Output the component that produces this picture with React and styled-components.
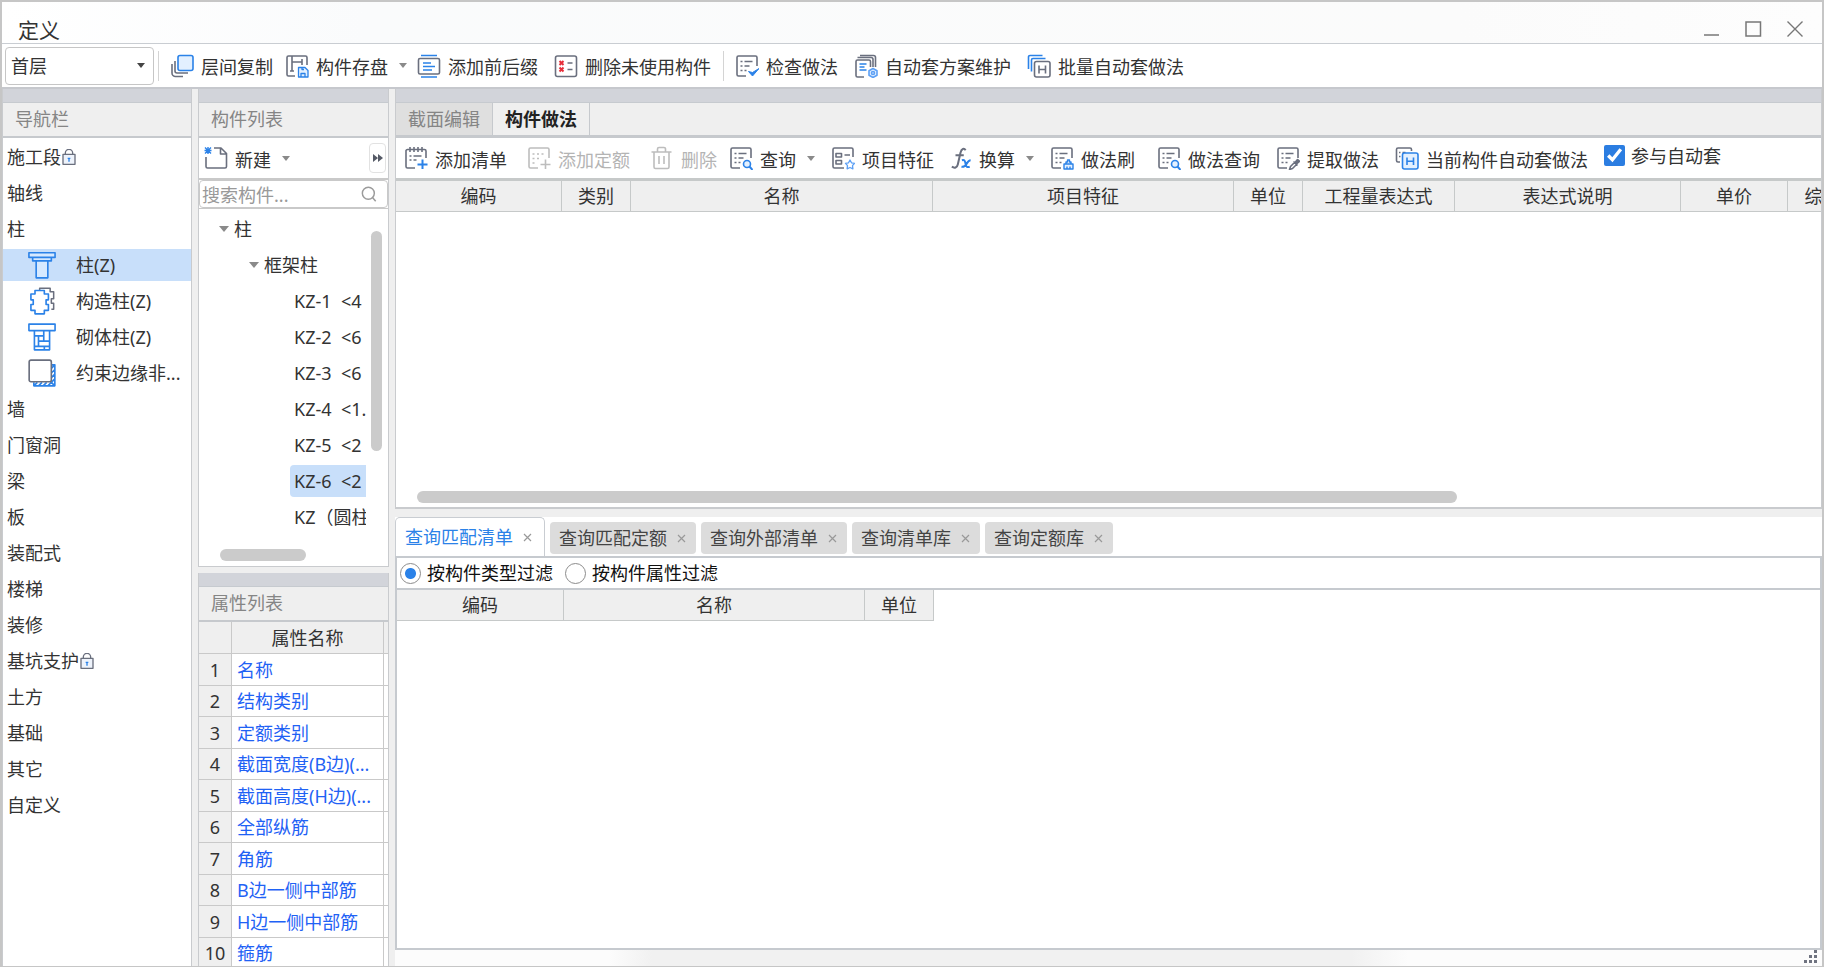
import React, { useState } from "react";
import styled, { createGlobalStyle } from "styled-components";

const GRAY = "#6a6f7e";
const BLUE = "#2b82e8";
const LIGHT = "#e3f0ff";

const Svg = ({ size = 24, children, color = GRAY }) => (
  <svg
    width={size}
    height={size}
    viewBox="0 0 24 24"
    fill="none"
    stroke={color}
    strokeWidth="1.6"
    strokeLinejoin="round"
    aria-hidden="true"
  >
    {children}
  </svg>
);

const DocLines = () => (
  <>
    <path d="M11 22H3.500a1.500 1.500 0 0 1-1.500-1.500v-17A1.500 1.500 0 0 1 3.500 2h17A1.500 1.500 0 0 1 22 3.500V12" />
    <path d="M5.500 7.500h2M9.500 7.500h8M5.500 12h2M9.500 12h5M5.500 16.500h2M9.500 16.500h2" />
  </>
);

const icons = {
  copy: (
    <Svg>
      <path d="M5 7v10a2 2 0 0 0 2 2h11M2 10v9a3.500 3.500 0 0 0 3.500 3.500H13" />
      <rect x="8" y="1.500" width="15" height="15" rx="2" stroke={BLUE} fill={LIGHT} />
    </Svg>
  ),
  save: (
    <Svg>
      <path d="M10 22H3.500A1.500 1.500 0 0 1 2 20.500v-17A1.500 1.500 0 0 1 3.500 2h17A1.500 1.500 0 0 1 22 3.500V11" />
      <path d="M7 2v15M17 5v6M7 8h10M5 17h4" />
      <path d="M13.500 13.500h6.500l3 3V23h-9.500zM16 23v-3.500h4V23M17 13.500v2h2" stroke={BLUE} fill={LIGHT} strokeWidth="1.300" />
    </Svg>
  ),
  affix: (
    <Svg>
      <rect x="1.500" y="4.500" width="21" height="15.500" rx="1.500" />
      <path d="M4 1.500h16M4 23h16M6 9h8M6 12.500h12M6 16h9" stroke={BLUE} />
    </Svg>
  ),
  clean: (
    <Svg>
      <rect x="1.500" y="2" width="21" height="20.500" rx="2" />
      <path d="M13.500 9h5M13.500 15.500h5" />
      <path d="M5.500 7l4 4M9.500 7l-4 4M5.500 13.500l4 4M9.500 13.500l-4 4" stroke="#e62e3a" strokeWidth="2" />
    </Svg>
  ),
  check: (
    <Svg>
      <DocLines />
      <path d="M13.500 17.500l4 4.500L24 14.500l-6.500 4z" stroke={BLUE} fill={BLUE} strokeWidth="1" />
    </Svg>
  ),
  scheme: (
    <Svg>
      <path d="M10 23H3.500A1.500 1.500 0 0 1 2 21.500v-14A1.500 1.500 0 0 1 3.500 6H15a1.500 1.500 0 0 1 1.500 1.500V13" />
      <path d="M3.500 3.500H17A2 2 0 0 1 19 5.500V13M6 1.500h13.500A2 2 0 0 1 21.500 3.500V13" />
      <path d="M5.500 10h7M5.500 13h5M5.500 16h7" stroke={BLUE} />
      <path d="M19 14.500l4 2.300v4.400l-4 2.300-4-2.300v-4.400z" stroke="#5da0f5" fill={LIGHT} />
      <circle cx="19" cy="19" r="1.500" stroke="#5da0f5" />
    </Svg>
  ),
  batch: (
    <Svg>
      <path d="M1.500 15V3a1.500 1.500 0 0 1 1.500-1.500h12.500M4.500 17.500V6A1.500 1.500 0 0 1 6 4.500h12.500" stroke={BLUE} />
      <rect x="7.500" y="7.500" width="15.500" height="15.500" rx="2" />
      <path d="M12 11.500v8M18.500 11.500v8M12 15.500h6.500" />
    </Svg>
  ),
  create: (
    <Svg>
      <path d="M10 2h7l5.500 5.500v13A1.500 1.500 0 0 1 21 22H3.500A1.500 1.500 0 0 1 2 20.500V11M16.500 2v6h6" />
      <path d="M1 1.500l6 6M7 1.500l-6 6M4 1v7M.5 4.500h7" stroke={BLUE} strokeWidth="1.400" />
    </Svg>
  ),
  addList: (
    <Svg>
      <path d="M11 22H3.500A1.500 1.500 0 0 1 2 20.500v-16A1.500 1.500 0 0 1 3.500 3.500h17A1.500 1.500 0 0 1 22 5v7" />
      <path d="M6 1v5M10 1v5M14 1v5M18 1v5M5.500 10h2M9.500 10h8M5.500 14h2M9.500 14h3" />
      <path d="M18.500 13.500V23M13.500 18.500h10" stroke={BLUE} strokeWidth="2" />
    </Svg>
  ),
  addQuota: (
    <Svg color="#bdbdbd">
      <path d="M11 22H3.500A1.500 1.500 0 0 1 2 20.500v-17A1.500 1.500 0 0 1 3.500 2h17A1.500 1.500 0 0 1 22 3.500V12" />
      <path d="M5.500 8h2M10 8h2M14.500 8h2M5.500 12.500h2M10 12.500h2M5.500 17h2M18.500 13.500V23M13.500 18.500h10" />
    </Svg>
  ),
  trash: (
    <Svg color="#bdbdbd">
      <path d="M1.500 6h20M7.500 6V3A1.500 1.500 0 0 1 9 1.500h5A1.500 1.500 0 0 1 15.500 3v3M4 6v15a1.500 1.500 0 0 0 1.500 1.500h12A1.500 1.500 0 0 0 19 21V6M9 10v8M14 10v8" />
    </Svg>
  ),
  query: (
    <Svg>
      <DocLines />
      <circle cx="18" cy="18" r="3.500" stroke={BLUE} fill={LIGHT} />
      <path d="M20.500 20.500L23.500 24" stroke={BLUE} strokeWidth="2" />
    </Svg>
  ),
  feature: (
    <Svg>
      <path d="M13 22H3.500A1.500 1.500 0 0 1 2 20.500v-17A1.500 1.500 0 0 1 3.500 2h17A1.500 1.500 0 0 1 22 3.500V11" />
      <path d="M5 7.500h5.500v3.500H5zM5 14.500h5.500V18H5zM13.500 9H19" />
      <path d="M19 14l1.500 2.800 3 .5-2 2.300.4 3.200-2.900-1.300-2.900 1.300.4-3.200-2-2.300 3-.5z" stroke="#5da0f5" strokeWidth="1.300" />
    </Svg>
  ),
  fx: (
    <Svg size={22}>
      <path d="M17 3.500c-1.500-2.500-4.500-2-5.500 2.500l-3 13c-.8 3.500-3.500 4.500-6.500 2.500M6 9h9" strokeWidth="2.200" />
      <path d="M13 14.500c3-1 3.500 1 4 4s1.500 4 4.500 3M22.500 14.500c-2 0-3 1.500-4.500 4s-3 3.500-5.500 3" stroke={BLUE} strokeWidth="2.200" />
    </Svg>
  ),
  brush: (
    <Svg>
      <DocLines />
      <path d="M14 23v-5h9v5zM16 18v-2h1.500v-2h2v2H21v2M17 23v-2.500M20 23v-2.500" stroke={BLUE} fill={LIGHT} strokeWidth="1.400" />
    </Svg>
  ),
  extract: (
    <Svg>
      <DocLines />
      <path d="M13.500 23.500l1-3 4-4 2 2-4 4zM17.500 15.500l4 4M20 17.500l3-3.500" />
      <path d="M19 16.500l2.500-3 2 2-3 2.500z" fill={GRAY} />
    </Svg>
  ),
  current: (
    <Svg>
      <path d="M5 16H3a1.500 1.500 0 0 1-1.500-1.500v-11A1.500 1.500 0 0 1 3 2h12a1.500 1.500 0 0 1 1.500 1.500V5M4 6.500h1.500M7.500 6.500h3M4 10.500h1.500" />
      <rect x="7.500" y="7" width="15.500" height="16" rx="2" stroke={BLUE} fill={LIGHT} />
      <path d="M12 11.500v7.500M18.500 11.500v7.500M12 15.200h6.500" stroke={BLUE} />
    </Svg>
  ),
  lock: (
    <Svg size={16}>
      <path d="M6.500 8V6a5 5 0 0 1 11 0v2" strokeWidth="2" />
      <rect x="3" y="8" width="18" height="15" strokeWidth="2" fill="#eef3fb" />
      <path d="M12 13v6M10 14h4" stroke={BLUE} strokeWidth="2" />
    </Svg>
  ),
  search: (
    <Svg size={16} color="#9b9b9b">
      <circle cx="11" cy="11" r="9" strokeWidth="2.200" />
      <path d="M17 17l5 6" strokeWidth="2.200" />
    </Svg>
  ),
  column: (
    <Svg size={28} color={BLUE}>
      <path d="M.8 1.500h22.400v4H.8zM4 5.500h16v3H4zM7 8.500h10V23H7z" fill="#d6e9ff" strokeWidth="1.400" />
    </Svg>
  ),
  structural: (
    <Svg size={28}>
      <path d="M10 3V1h9v3h3v6h-2v4h2v5h-2" strokeWidth="1.300" />
      <path d="M6 3h8v3h3.500v5h-2v4h2v5H14v3H6v-3H2.500v-5h2v-4h-2V6H6z" stroke={BLUE} strokeWidth="1.400" fill="#fff" />
    </Svg>
  ),
  masonry: (
    <Svg size={28} color={BLUE}>
      <path d="M.8 1h22.400v5.500H.8zM5.500 6.500V23h13V6.500M5.500 11h8M9 15.500h9.500M5.500 20h13M13.500 6.500v9M9 11v9M14 20v3" strokeWidth="1.400" />
    </Svg>
  ),
  edge: (
    <Svg size={28}>
      <path d="M5 20v3h18V5h-3M5 23l3-3M9 23l3-3M13 23l3-3M17 23l6-6M20 16l3-3M20 12l3-3M20 8l3-3M20 20l3 3" stroke={BLUE} strokeWidth="1.400" />
      <rect x="1" y="1" width="19" height="18.500" rx="1.500" fill="#fff" strokeWidth="1.400" />
    </Svg>
  ),
};

const mainTools = [
  { icon: "copy", label: "层间复制", after: 12 },
  { icon: "save", label: "构件存盘", caret: true, after: 10 },
  { icon: "affix", label: "添加前后缀", after: 16 },
  { icon: "clean", label: "删除未使用构件", after: 8 },
  { divider: true },
  { icon: "check", label: "检查做法", after: 16 },
  { icon: "scheme", label: "自动套方案维护", after: 16 },
  { icon: "batch", label: "批量自动套做法", after: 16 },
];

const recipeTools = [
  { icon: "addList", label: "添加清单", after: 20 },
  { icon: "addQuota", label: "添加定额", after: 20, disabled: true },
  { icon: "trash", label: "删除", after: 12, disabled: true },
  { icon: "query", label: "查询", caret: true, after: 16 },
  { icon: "feature", label: "项目特征", after: 16 },
  { icon: "fx", label: "换算", caret: true, after: 16 },
  { icon: "brush", label: "做法刷", after: 22 },
  { icon: "query", label: "做法查询", after: 16 },
  { icon: "extract", label: "提取做法", after: 16 },
  { icon: "current", label: "当前构件自动套做法", after: 16 },
];

const navItems = [
  { label: "施工段", locked: true },
  { label: "轴线" },
  { label: "柱" },
  { label: "柱(Z)", icon: "column" },
  { label: "构造柱(Z)", icon: "structural" },
  { label: "砌体柱(Z)", icon: "masonry" },
  { label: "约束边缘非...", icon: "edge" },
  { label: "墙" },
  { label: "门窗洞" },
  { label: "梁" },
  { label: "板" },
  { label: "装配式" },
  { label: "楼梯" },
  { label: "装修" },
  { label: "基坑支护", locked: true },
  { label: "土方" },
  { label: "基础" },
  { label: "其它" },
  { label: "自定义" },
];

const members = ["KZ-1  <4", "KZ-2  <6", "KZ-3  <6", "KZ-4  <1.", "KZ-5  <2", "KZ-6  <2", "KZ（圆柱"];

const properties = [
  "名称",
  "结构类别",
  "定额类别",
  "截面宽度(B边)(...",
  "截面高度(H边)(...",
  "全部纵筋",
  "角筋",
  "B边一侧中部筋",
  "H边一侧中部筋",
  "箍筋",
];

const recipeColumns = [
  ["编码", 166],
  ["类别", 69],
  ["名称", 302],
  ["项目特征", 301],
  ["单位", 69],
  ["工程量表达式", 152],
  ["表达式说明", 226],
  ["单价", 107],
  ["综合单价", 106],
];

const matchColumns = [
  ["编码", 167],
  ["名称", 301],
  ["单位", 69],
];

const queryTabs = ["查询匹配清单", "查询匹配定额", "查询外部清单", "查询清单库", "查询定额库"];

const ToolItem = ({ tool }) => (
  <Tool type="button" disabled={tool.disabled} $after={tool.after}>
    {icons[tool.icon]}
    <span>{tool.label}</span>
    {tool.caret && <Caret />}
  </Tool>
);

const HeaderTable = ({ columns, label }) => {
  const total = columns.reduce((sum, col) => sum + col[1], 0);
  return (
    <Grid aria-label={label} style={{ width: total }}>
      <thead>
        <tr>
          {columns.map(([name, width]) => (
            <th key={name} style={{ width }}>
              {name}
            </th>
          ))}
        </tr>
      </thead>
    </Grid>
  );
};

const App = () => {
  const [nav, setNav] = useState("柱(Z)");
  const [member, setMember] = useState(members[5]);
  const [tab, setTab] = useState(queryTabs[0]);
  const [filter, setFilter] = useState("type");
  const [auto, setAuto] = useState(true);

  return (
    <Window>
      <GlobalStyle />
      <TitleBar>
        <h1>定义</h1>
        <WindowButtons>
          <button type="button" aria-label="最小化">
            <svg width="18" height="18" stroke="#777" fill="none"><path d="M2 15h15" strokeWidth="1.500" /></svg>
          </button>
          <button type="button" aria-label="最大化">
            <svg width="18" height="18" stroke="#777" fill="none"><rect x="2" y="2" width="14.500" height="14" strokeWidth="1.500" /></svg>
          </button>
          <button type="button" aria-label="关闭">
            <svg width="18" height="18" stroke="#777" fill="none"><path d="M1.500 1.500l15 15M16.500 1.500l-15 15" strokeWidth="1.400" /></svg>
          </button>
        </WindowButtons>
      </TitleBar>
      <MainToolbar>
        <FloorBox>
          <select aria-label="楼层" defaultValue="首层">
            <option>首层</option>
          </select>
          <Caret $dark />
        </FloorBox>
        <Divider />
        {mainTools.map((tool, i) =>
          tool.divider ? <Divider key={i} /> : <ToolItem key={i} tool={tool} />
        )}
      </MainToolbar>

      <Body>
        <Panel>
          <Band />
          <PanelTitle>导航栏</PanelTitle>
          <NavList>
            {navItems.map((item) => (
              <li key={item.label}>
                <NavButton
                  type="button"
                  $child={!!item.icon}
                  $active={nav === item.label}
                  onClick={() => setNav(item.label)}
                >
                  {item.icon && icons[item.icon]}
                  <span>{item.label}</span>
                  {item.locked && icons.lock}
                </NavButton>
              </li>
            ))}
          </NavList>
        </Panel>

        <Stack>
          <MemberPanel>
            <Band />
            <PanelTitle>构件列表</PanelTitle>
            <PanelTools>
              <ToolItem tool={{ icon: "create", label: "新建", caret: true, after: 0 }} />
              <MoreButton type="button" aria-label="更多">
                <svg width="10" height="8" fill="#555a66"><path d="M0 0l5 4-5 4zM5 0l5 4-5 4z" /></svg>
              </MoreButton>
            </PanelTools>
            <SearchBox>
              <input type="text" aria-label="搜索构件" placeholder="搜索构件..." />
              {icons.search}
            </SearchBox>
            <TreeArea>
              <Tree>
                <TreeRow $depth={0}><Caret /><span>柱</span></TreeRow>
                <TreeRow $depth={1}><Caret /><span>框架柱</span></TreeRow>
                {members.map((name) => (
                  <TreeRow key={name} $depth={2}>
                    <Leaf type="button" $active={member === name} onClick={() => setMember(name)}>
                      {name}
                    </Leaf>
                  </TreeRow>
                ))}
              </Tree>
              <VerticalThumb />
              <TreeThumb />
            </TreeArea>
          </MemberPanel>

          <PropertyPanel>
            <Band />
            <PanelTitle>属性列表</PanelTitle>
            <PropertyTable aria-label="属性列表">
              <thead>
                <tr><th /><th>属性名称</th><th /></tr>
              </thead>
              <tbody>
                {properties.map((name, i) => (
                  <tr key={name}>
                    <th scope="row">{i + 1}</th>
                    <td>{name}</td>
                    <td />
                  </tr>
                ))}
              </tbody>
            </PropertyTable>
          </PropertyPanel>
        </Stack>

        <Work>
          <RecipePanel>
            <Band />
            <ViewTabs>
              <ViewTab type="button">截面编辑</ViewTab>
              <ViewTab type="button" $active>构件做法</ViewTab>
            </ViewTabs>
            <RecipeToolbar>
              {recipeTools.map((tool) => <ToolItem key={tool.label} tool={tool} />)}
              <CheckLabel>
                <input type="checkbox" checked={auto} onChange={() => setAuto(!auto)} />
                参与自动套
              </CheckLabel>
            </RecipeToolbar>
            <TableArea>
              <HeaderTable columns={recipeColumns} label="构件做法" />
            </TableArea>
            <RecipeThumb />
          </RecipePanel>

          <QueryTabs>
            {queryTabs.map((name) => (
              <QueryTab key={name} $active={tab === name}>
                <button type="button" onClick={() => setTab(name)}>{name}</button>
                <button type="button" aria-label={`关闭${name}`}>
                  <svg width="9" height="9" stroke="#999"><path d="M1 1l7 7M8 1l-7 7" strokeWidth="1.200" /></svg>
                </button>
              </QueryTab>
            ))}
          </QueryTabs>
          <QueryPanel>
            <Filters>
              <label>
                <input type="radio" name="filter" checked={filter === "type"} onChange={() => setFilter("type")} />
                按构件类型过滤
              </label>
              <label>
                <input type="radio" name="filter" checked={filter === "prop"} onChange={() => setFilter("prop")} />
                按构件属性过滤
              </label>
            </Filters>
            <TableArea>
              <HeaderTable columns={matchColumns} label="查询匹配清单" />
            </TableArea>
          </QueryPanel>
          <StatusBar>
            <svg width="14" height="14" fill="#6f7380">
              <path d="M10 0h3v3h-3zM5 5h3v3h-3zM10 5h3v3h-3zM0 10h3v3h-3zM5 10h3v3h-3zM10 10h3v3h-3z" />
            </svg>
          </StatusBar>
        </Work>
      </Body>
    </Window>
  );
};

const GlobalStyle = createGlobalStyle`
  * {
    box-sizing: border-box;
  }
  body {
    margin: 0;
    background: #fff;
  }
  body, button, input, select {
    font-family: "Noto Sans", "Noto Sans CJK SC", sans-serif;
    font-size: 18px;
    line-height: 24px;
    color: #333;
  }
  button {
    padding: 0;
    border: none;
    background: none;
    white-space: nowrap;
  }
  svg {
    display: block;
    flex: none;
  }
`;

const Window = styled.div`
  height: 100vh;
  display: flex;
  flex-direction: column;
  overflow: hidden;
  border: 2px solid #c6c6c6;
  border-bottom-width: 1px;
`;

const TitleBar = styled.header`
  height: 42px;
  flex: none;
  display: flex;
  justify-content: space-between;
  padding: 14px 18px 0 16px;
  border-bottom: 1px solid #c9cdd2;
  background: linear-gradient(90deg, #fff, #fafbfc 20%, #fbfbfb 80%, #fdfdfd);
  h1 {
    margin: 0;
    font-size: 21px;
    line-height: 28px;
    font-weight: 400;
  }
`;

const WindowButtons = styled.div`
  display: flex;
  gap: 24px;
  padding-top: 4px;
  button {
    height: 18px;
  }
`;

const MainToolbar = styled.div`
  height: 43px;
  flex: none;
  display: flex;
  align-items: center;
  padding-left: 3px;
`;

const FloorBox = styled.div`
  width: 149px;
  height: 38px;
  display: flex;
  align-items: center;
  padding-right: 8px;
  border: 1px solid #c6c6c6;
  border-radius: 4px;
  select {
    flex: 1;
    height: 36px;
    appearance: none;
    border: none;
    background: none;
    padding: 0 5px;
  }
`;

const Caret = styled.i`
  flex: none;
  border: 4px solid transparent;
  border-top: 5px solid ${(p) => (p.$dark ? "#444" : "#8a8a8a")};
  border-bottom: none;
`;

const Divider = styled.i`
  width: 1px;
  height: 30px;
  margin: 0 11px 0 4px;
  background: #d4d4d4;
`;

const Tool = styled.button`
  display: flex;
  align-items: center;
  gap: 7px;
  height: 28px;
  margin-right: ${(p) => p.$after}px;
  color: ${(p) => (p.disabled ? "#b4b4b4" : "#333")};
  span {
    padding-top: 3px;
  }
  ${Caret} {
    margin-left: 4px;
  }
`;

const Body = styled.div`
  flex: 1;
  min-height: 0;
  display: grid;
  grid-template-columns: 190px 191px minmax(0, 1fr);
  gap: 6px;
  background: #efefef;
  border-top: 2px solid #c6c8cd;
`;

const Panel = styled.section`
  display: flex;
  flex-direction: column;
  min-height: 0;
  background: #fff;
  border: solid #c9cbce;
  border-width: 0 1px;
`;

const Band = styled.div`
  height: 14px;
  flex: none;
  background: #d2d4da;
  border-bottom: 1px solid #c6cacf;
`;

const PanelTitle = styled.h2`
  height: 35px;
  flex: none;
  margin: 0;
  padding: 4px 12px;
  font-size: 18px;
  line-height: 24px;
  font-weight: 400;
  color: #858585;
  background: #efefef;
  border-bottom: 2px solid #c6c9cd;
`;

const NavList = styled.ul`
  list-style: none;
  margin: 0;
  padding: 1px 0 0;
  li {
    height: 36px;
    padding: 2px 0;
  }
`;

const NavButton = styled.button`
  display: flex;
  align-items: center;
  width: 100%;
  height: 32px;
  padding-left: ${(p) => (p.$child ? 25 : 4)}px;
  background: ${(p) => (p.$active ? "#c8dffa" : "none")};
  ${(p) => p.$child && "gap: 20px;"}
`;

const Stack = styled.div`
  display: flex;
  flex-direction: column;
  gap: 6px;
  min-height: 0;
`;

const MemberPanel = styled(Panel)`
  flex: 0 0 478px;
  border-bottom-width: 1px;
`;

const PanelTools = styled.div`
  height: 42px;
  flex: none;
  display: flex;
  align-items: center;
  justify-content: space-between;
  padding: 0 2px 0 5px;
  border-bottom: 2px solid #c9c9c9;
`;

const MoreButton = styled.button`
  width: 17px;
  height: 30px;
  display: flex;
  align-items: center;
  justify-content: center;
  border: 1px solid #e2e2e2;
  border-radius: 4px;
`;

const SearchBox = styled.div`
  height: 28px;
  flex: none;
  display: flex;
  align-items: center;
  padding: 0 10px 0 2px;
  border: 1px solid #c9c9c9;
  border-radius: 4px;
  input {
    flex: 1;
    min-width: 0;
    height: 26px;
    padding: 1px 0 0;
    border: none;
    background: none;
  }
  input::placeholder {
    color: #999;
  }
`;

const TreeArea = styled.div`
  flex: 1;
  display: grid;
  grid-template-columns: minmax(0, 1fr) 11px;
  grid-template-rows: 1fr 12px;
  column-gap: 5px;
  padding: 2px 6px 5px 0;
  border-top: 1px solid #c9c9c9;
`;

const Tree = styled.div`
  overflow: hidden;
`;

const TreeRow = styled.div`
  display: flex;
  align-items: center;
  gap: 5px;
  height: 36px;
  padding-left: ${(p) => (p.$depth === 2 ? 91 : 20 + p.$depth * 30)}px;
  white-space: nowrap;
  ${Caret} {
    border-width: 6px 5px 0;
  }
`;

const Leaf = styled.button`
  flex: none;
  height: 32px;
  min-width: 90px;
  padding-left: 4px;
  text-align: left;
  white-space: pre;
  border-radius: 4px;
  background: ${(p) => (p.$active ? "#c8dffa" : "none")};
`;

const Thumb = styled.div`
  border-radius: 6px;
  background: #cbcbcb;
`;

const VerticalThumb = styled(Thumb)`
  height: 220px;
  margin-top: 20px;
`;

const TreeThumb = styled(Thumb)`
  width: 86px;
  height: 12px;
  margin-left: 21px;
`;

const PropertyPanel = styled(Panel)`
  flex: 1;
  overflow: hidden;
`;

const PropertyTable = styled.table`
  width: 100%;
  table-layout: fixed;
  border-collapse: separate;
  border-spacing: 0;
  th, td {
    height: 31px;
    padding: 0 0 0 5px;
    border: solid #c9c9c9;
    border-width: 0 1px 1px 0;
    text-align: left;
    white-space: nowrap;
    overflow: hidden;
  }
  tr:nth-child(odd) > * {
    height: 32px;
  }
  th {
    padding: 0;
    text-align: center;
    font-weight: 400;
    background: #efefef;
  }
  thead th:first-child {
    width: 33px;
  }
  thead th:last-child {
    width: 4px;
  }
  tr > :last-child {
    border-right: none;
    padding: 0;
  }
  td {
    color: #1f62f5;
  }
`;

const Work = styled.main`
  display: flex;
  flex-direction: column;
  min-width: 0;
  min-height: 0;
`;

const RecipePanel = styled(Panel)`
  flex: 0 0 420px;
  margin-bottom: 8px;
  border-bottom-width: 2px;
`;

const ViewTabs = styled.div`
  height: 35px;
  flex: none;
  display: flex;
  background: #efefef;
  border-bottom: 3px solid #c6c9cd;
`;

const ViewTab = styled.button`
  padding: 0 12px;
  border-right: 1px solid #c6c9cd;
  color: ${(p) => (p.$active ? "#222" : "#858585")};
  font-weight: ${(p) => (p.$active ? 700 : 400)};
  background: ${(p) => (p.$active ? "#efefef" : "#dfdfdf")};
`;

const RecipeToolbar = styled.div`
  height: 43px;
  flex: none;
  display: flex;
  align-items: center;
  padding-left: 8px;
  overflow: hidden;
  border-bottom: 3px solid #c6c9c9;
`;

const CheckLabel = styled.label`
  display: flex;
  align-items: center;
  gap: 6px;
  height: 35px;
  align-self: flex-start;
  white-space: nowrap;
  input {
    width: 21px;
    height: 21px;
    margin: 0;
    accent-color: #2b7de1;
  }
`;

const TableArea = styled.div`
  flex: 1;
  min-height: 0;
  overflow: hidden;
`;

const Grid = styled.table`
  table-layout: fixed;
  border-collapse: separate;
  border-spacing: 0;
  th {
    height: 31px;
    padding: 0;
    font-weight: 400;
    background: #efefef;
    border: solid #c6c9c9;
    border-width: 0 1px 1px 0;
  }
`;

const RecipeThumb = styled(Thumb)`
  flex: none;
  width: 73%;
  height: 12px;
  margin: 0 0 4px 21px;
`;

const QueryTabs = styled.div`
  height: 39px;
  flex: none;
  display: flex;
  align-items: flex-end;
  gap: 5px;
  background: #fff;
`;

const QueryTab = styled.div`
  display: flex;
  align-items: center;
  gap: 10px;
  height: ${(p) => (p.$active ? 39 : 32)}px;
  margin-bottom: ${(p) => (p.$active ? 0 : 2)}px;
  padding: 0 ${(p) => (p.$active ? 12 : 10)}px 0 9px;
  border: ${(p) => (p.$active ? "1px solid #c9cdd2" : "none")};
  border-bottom: none;
  border-radius: ${(p) => (p.$active ? "5px 5px 0 0" : "4px")};
  background: ${(p) => (p.$active ? "#fff" : "#dcdcdc")};
  button {
    color: ${(p) => (p.$active ? BLUE : "#444")};
  }
`;

const QueryPanel = styled.section`
  flex: 1;
  min-height: 0;
  display: flex;
  flex-direction: column;
  background: #fff;
  border: 2px solid #c6cacf;
`;

const Filters = styled.div`
  height: 32px;
  flex: none;
  display: flex;
  align-items: center;
  gap: 12px;
  padding-left: 3px;
  border-bottom: 2px solid #c6cacf;
  color: #111;
  label {
    display: flex;
    align-items: center;
    gap: 6px;
  }
  input {
    appearance: none;
    width: 21px;
    height: 21px;
    margin: 0;
    border: 1px solid #8c8c8c;
    border-radius: 50%;
    background: #fff;
  }
  input:checked {
    background: radial-gradient(circle, ${BLUE} 5px, #fff 6px);
  }
`;

const StatusBar = styled.footer`
  height: 16px;
  flex: none;
  display: flex;
  justify-content: flex-end;
  padding: 0 4px 0 0;
  background: linear-gradient(90deg, #fcfcfc 15%, #f1f1f1 18%, #f1f1f1 67%, #fcfcfc 71%);
`;

export default App;
